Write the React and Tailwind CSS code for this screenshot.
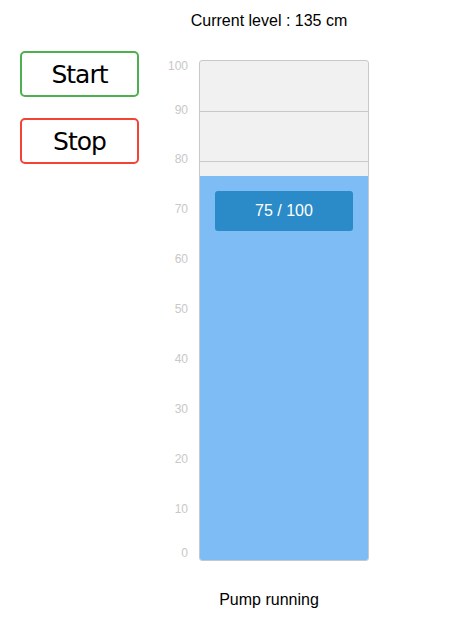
import React from 'react';

// gap above each tick label, in px (labels are 14px tall)
const ticks = [
    { v: 100, mt: 'mt-[-1px]' },
    { v: 90, mt: 'mt-[30px]' },
    { v: 80, mt: 'mt-[35px]' },
    { v: 70, mt: 'mt-[36px]' },
    { v: 60, mt: 'mt-[36px]' },
    { v: 50, mt: 'mt-[36px]' },
    { v: 40, mt: 'mt-[36px]' },
    { v: 30, mt: 'mt-[36px]' },
    { v: 20, mt: 'mt-[36px]' },
    { v: 10, mt: 'mt-[36px]' },
    { v: 0, mt: 'mt-[30px]' },
];

function Tank({ value, max }) {
    const fillPct = 77;
    return (
        <div className="flex">
            {/* scale */}
            <div className="w-[28px] h-[501px] flex flex-col items-end text-[12px] text-[#c8c8c8] leading-[14px]">
                {ticks.map((t) => (
                    <span key={t.v} className={`h-[14px] ${t.mt}`}>{t.v}</span>
                ))}
            </div>
            {/* tank */}
            <div className="ml-[11px] w-[170px] h-[501px] border border-[#c8c8c8] rounded-[3px] bg-[#f1f1f1] relative overflow-hidden flex flex-col">
                <div className="h-[51px] border-b border-[#c8c8c8] shrink-0" />
                <div className="h-[50px] border-b border-[#c8c8c8] shrink-0" />
                <div className="absolute left-0 right-0 bottom-0 bg-[#7dbcf5]" style={{ height: `${fillPct}%` }}>
                    <div className="mx-[15px] mt-[15px] h-[40px] rounded-[3px] bg-[#2a8bc8] text-white text-[16px] flex items-center justify-center">
                        {value} / {max}
                    </div>
                </div>
            </div>
        </div>
    );
}

export default function App() {
    return (
        <div className="w-[458px] h-[619px] bg-white flex font-['Liberation_Sans',Arial,sans-serif] text-black">
            {/* buttons */}
            <div className="pl-[20px] pt-[51px] flex flex-col gap-[21px]">
                <button className="w-[119px] h-[46px] pt-[2px] border-2 border-[#4caf50] rounded-[5px] bg-white text-[25px] font-['DejaVu_Sans',Tahoma,sans-serif] tracking-[-1px]">
                    Start
                </button>
                <button className="w-[119px] h-[46px] pt-[2px] border-2 border-[#f44336] rounded-[5px] bg-white text-[25px] font-['DejaVu_Sans',Tahoma,sans-serif] tracking-[-1px]">
                    Stop
                </button>
            </div>

            {/* level */}
            <div className="ml-[21px] w-[218px] flex flex-col items-center">
                <div className="mt-[12px] h-[18px] text-[16px] leading-[18px]">Current level : 135 cm</div>
                <div className="mt-[30px] self-start">
                    <Tank value={75} max={100} />
                </div>
                <div className="mt-[30px] text-[16px] leading-[18px]">Pump running</div>
            </div>
        </div>
    );
}
